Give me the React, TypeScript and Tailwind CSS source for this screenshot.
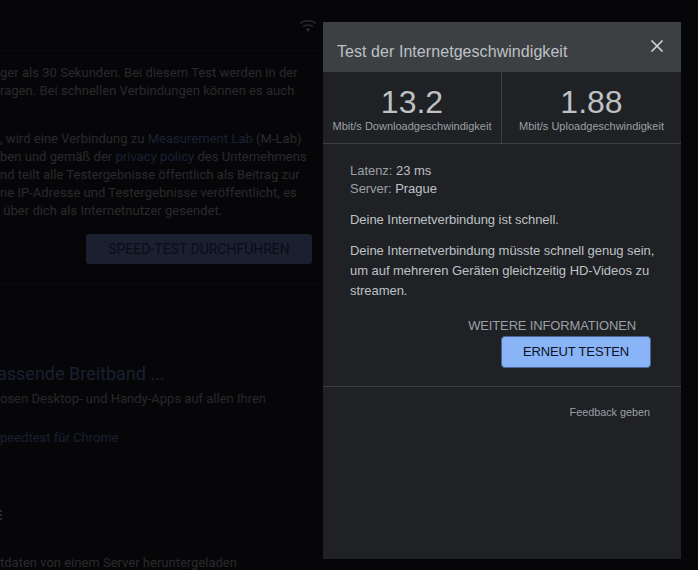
const bgLines = [
  "ger als 30 Sekunden. Bei diesem Test werden in der",
  "ragen. Bei schnellen Verbindungen können es auch",
];

const bgLines2 = [
  "nd teilt alle Testergebnisse öffentlich als Beitrag zur",
  "ne IP-Adresse und Testergebnisse veröffentlicht, es",
  " über dich als Internetnutzer gesendet.",
];

const Background = () => {
  return (
    <div className="h-[570px] w-[323px] overflow-hidden font-['Roboto',sans-serif] text-[13px] leading-[18px] tracking-[0.03px] text-[#2a2a2c]">
      <div className="flex h-[51px] items-end justify-end border-b border-[#0c0c0e] pb-[17px] pr-[6px]">
        <svg width="18" height="14" viewBox="0 0 18 14" fill="none" stroke="#28282a" strokeWidth="1.6">
          <path d="M1 4.5C5.5 .8 12.5 .8 17 4.5" />
          <path d="M4 7.6C6.8 5.4 11.2 5.4 14 7.6" />
          <path d="M9 13 6.6 10C8 9 10 9 11.4 10Z" fill="#28282a" stroke="none" />
        </svg>
      </div>
      <div className="pt-[13px]">
        {bgLines.map((line) => (
          <div key={line} className="whitespace-nowrap">
            {line}
          </div>
        ))}
      </div>
      <div className="pt-[30px]">
        <div className="whitespace-nowrap">
          , wird eine Verbindung zu <span className="text-[#1a2136]">Measurement Lab</span> (M-Lab)
        </div>
        <div className="whitespace-nowrap">
          ben und gemäß der <span className="text-[#1a2136]">privacy policy</span> des Unternehmens
        </div>
        {bgLines2.map((line) => (
          <div key={line} className="whitespace-pre">
            {line}
          </div>
        ))}
      </div>
      <div className="flex justify-end pr-[11px] pt-[14px]">
        <div className="flex h-[30px] w-[226px] items-center justify-center rounded-[3px] bg-[#1a2030] text-[14px] tracking-normal text-[#0a0d16]">
          SPEED-TEST DURCHFÜHREN
        </div>
      </div>
      <div className="mt-[19px] border-t border-[#0c0c0e] pt-[78px] tracking-normal">
        <div className="ml-[-3px] whitespace-nowrap text-[18px] leading-[24px] text-[#1a2030]">assende Breitband ...</div>
        <div className="mt-[4px] whitespace-nowrap text-[#28282a]">osen Desktop- und Handy-Apps auf allen Ihren</div>
        <div className="mt-[21px] whitespace-nowrap text-[#1a2030]">peedtest für Chrome</div>
        <div className="mt-[59px] flex h-[18px] flex-col items-start justify-center gap-[2px]">
          <span className="h-[2px] w-[2px] bg-[#2b2b2d]" />
          <span className="h-[2px] w-[2px] bg-[#2b2b2d]" />
          <span className="h-[2px] w-[2px] bg-[#2b2b2d]" />
        </div>
        <div className="mt-[30px] whitespace-nowrap">tdaten von einem Server heruntergeladen</div>
      </div>
    </div>
  );
};

const Stat = ({ value, label, className }: { value: string; label: string; className: string }) => {
  return (
    <div className={`flex flex-col items-center pt-[12px] ${className}`}>
      <div className="text-[32px] leading-[36px] text-[#bdc1c6]">{value}</div>
      <div className="text-[11px] leading-[12px] text-[#9aa0a6]">{label}</div>
    </div>
  );
};

const App = () => {
  return (
    <div className="relative h-[570px] w-[698px] overflow-hidden bg-[#060608]">
      <Background />
      <div className="absolute left-[323px] top-[22px] flex h-[537px] w-[358px] flex-col bg-[#202124] font-['Liberation_Sans',Arial,sans-serif]">
        <div className="flex h-[50px] items-start justify-between bg-[#3c4043] pl-[14px] pr-[17px]">
          <div className="pt-[21px] text-[16px] leading-[18px] tracking-[0.06px] text-[#bdc1c6]">Test der Internetgeschwindigkeit</div>
          <svg className="mt-[17px]" width="14" height="14" viewBox="0 0 14 14" stroke="#d0d3d7" strokeWidth="1.7">
            <path d="M1.5 1.5 12.5 12.5M12.5 1.5 1.5 12.5" />
          </svg>
        </div>
        <div className="flex h-[72px] border-b border-[#3c4043]">
          <Stat value="13.2" label="Mbit/s Downloadgeschwindigkeit" className="w-[179px] border-r border-[#3c4043]" />
          <Stat value="1.88" label="Mbit/s Uploadgeschwindigkeit" className="flex-1" />
        </div>
        <div className="px-[27px] pt-[18px] text-[13px] tracking-[-0.04px] text-[#bdc1c6]">
          <div className="leading-[18px] text-[#9aa0a6]">
            Latenz: <span className="text-[#bdc1c6]">23 ms</span>
          </div>
          <div className="leading-[18px] text-[#9aa0a6]">
            Server: <span className="text-[#bdc1c6]">Prague</span>
          </div>
          <p className="mt-[13px] leading-[18px]">Deine Internetverbindung ist schnell.</p>
          <p className="mr-[-10px] mt-[12px] leading-[20px]">
            Deine Internetverbindung müsste schnell genug sein, um auf mehreren Geräten gleichzeitig HD-Videos zu
            streamen.
          </p>
          <div className="mt-[16px] flex flex-col items-end pr-[3px]">
            <div className="pr-[15px] leading-[18px] tracking-[-0.15px] text-[#9aa0a6]">WEITERE INFORMATIONEN</div>
            <div className="mt-[1px] flex h-[32px] w-[150px] items-center justify-center rounded-[4px] border border-[#4d6590] bg-[#8ab4f8] tracking-[-0.15px] text-[#0b1220]">
              ERNEUT TESTEN
            </div>
          </div>
        </div>
        <div className="mt-[18px] border-t border-[#3c4043] pr-[31px] pt-[19px] text-right text-[10.8px] leading-[12px] text-[#9aa0a6]">
          Feedback geben
        </div>
      </div>
    </div>
  );
};

export default App;
